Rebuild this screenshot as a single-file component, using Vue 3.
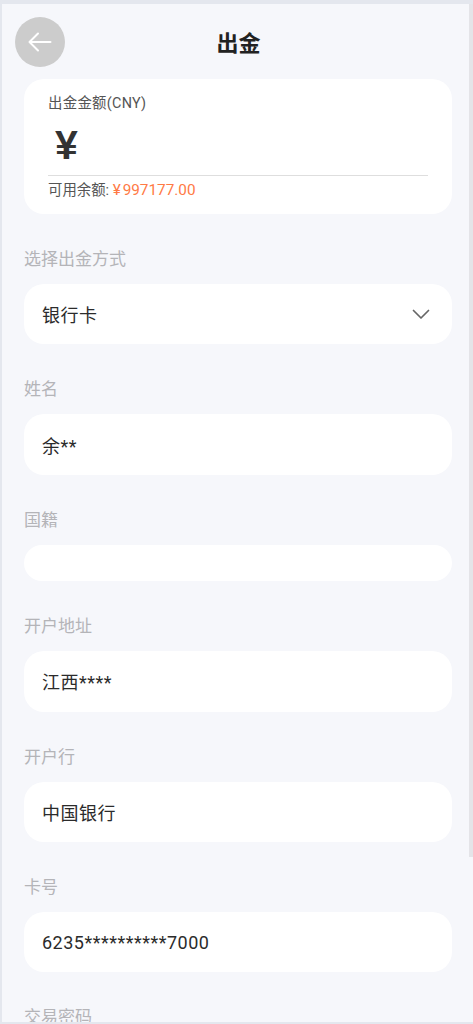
<template>
  <div class="frame">
    <div class="page">
      <div class="topbar">
        <button class="back">
          <svg width="26" height="26" viewBox="0 0 26 26" fill="none" stroke="#fff" stroke-width="2" stroke-linecap="round" stroke-linejoin="round">
            <path d="M2.5 13H23.5M11 4.5L2.5 13L11 21.5" />
          </svg>
        </button>
        <div class="title">出金</div>
      </div>

      <div class="amount-card">
        <div class="amount-label">出金金额(CNY)</div>
        <div class="amount-input">¥</div>
        <div class="balance">可用余额: <span class="balance-num"><span class="yen">¥</span>997177.00</span></div>
      </div>

      <div class="field" v-for="f in fields" :key="f.label">
        <div class="field-label">{{ f.label }}</div>
        <div class="field-box" :class="{ short: !f.value }">
          <span>{{ f.value }}</span>
          <svg v-if="f.select" width="18" height="11" viewBox="0 0 18 11" fill="none" stroke="#666" stroke-width="1.7" stroke-linecap="round" stroke-linejoin="round">
            <path d="M1.5 1.5L9 9L16.5 1.5" />
          </svg>
        </div>
      </div>
    </div>
    <div class="scrollbar"></div>
  </div>
</template>

<script setup>
const fields = [
  { label: '选择出金方式', value: '银行卡', select: true },
  { label: '姓名', value: '余**' },
  { label: '国籍', value: '' },
  { label: '开户地址', value: '江西****' },
  { label: '开户行', value: '中国银行' },
  { label: '卡号', value: '6235**********7000' },
  { label: '交易密码', value: '' }
]
</script>

<style>
html, body { margin: 0; background: #e4e7ee; }
</style>

<style scoped>
.frame {
  position: relative;
  height: 1024px;
  overflow: hidden;
  box-sizing: border-box;
  padding: 4px 0 2px 2px;
  background: #e4e7ee;
  font-family: Roboto, "Noto Sans CJK SC", sans-serif;
}
.page {
  height: 100%;
  overflow: hidden;
  box-sizing: border-box;
  padding: 0 21px 0 22px;
  background: #f6f7fb;
}
.topbar {
  display: flex;
  align-items: center;
  justify-content: center;
  height: 75px;
  position: relative;
}
.back {
  position: absolute;
  left: -9px;
  top: 13px;
  width: 50px;
  height: 50px;
  border: 0;
  padding: 0;
  border-radius: 50%;
  background: #cccccc;
  display: flex;
  align-items: center;
  justify-content: center;
}
.title {
  font-size: 22px;
  font-weight: 700;
  color: #222;
  margin-top: -2px;
  margin-left: 1px;
}
.amount-card {
  background: #fff;
  border-radius: 20px;
  padding: 15px 24px 12px 24px;
  height: 135px;
  box-sizing: border-box;
}
.amount-label {
  font-size: 14.4px;
  line-height: 20px;
  letter-spacing: 0.3px;
  color: #555;
}
.amount-input {
  margin-top: 7px;
  height: 54px;
  line-height: 48px;
  padding-left: 7px;
  font-size: 41px;
  font-weight: 700;
  color: #333;
  border-bottom: 1px solid #dedede;
  font-family: "Liberation Sans", sans-serif;
}
.balance {
  font-size: 14.4px;
  line-height: 20px;
  color: #555;
  margin-top: 4px;
}
.balance-num {
  color: #ff7a45;
  font-size: 15.3px;
}
.yen {
  margin-right: 2px;
}
.field {
  margin-top: 34px;
}
.field-label {
  font-size: 17px;
  line-height: 22px;
  color: #b4b4b8;
  margin-bottom: 14px;
}
.field-box {
  display: flex;
  align-items: center;
  justify-content: space-between;
  height: 60.4px;
  padding: 0 22px 0 18px;
  background: #fff;
  border-radius: 20px;
  font-size: 18px;
  letter-spacing: 0.5px;
  color: #2b2b2b;
}
.field-box.short {
  height: 36.4px;
  border-radius: 18px;
}
.scrollbar {
  position: absolute;
  top: 4px;
  right: 0;
  width: 4px;
  height: 853px;
  background: #e4e4e8;
}
</style>
